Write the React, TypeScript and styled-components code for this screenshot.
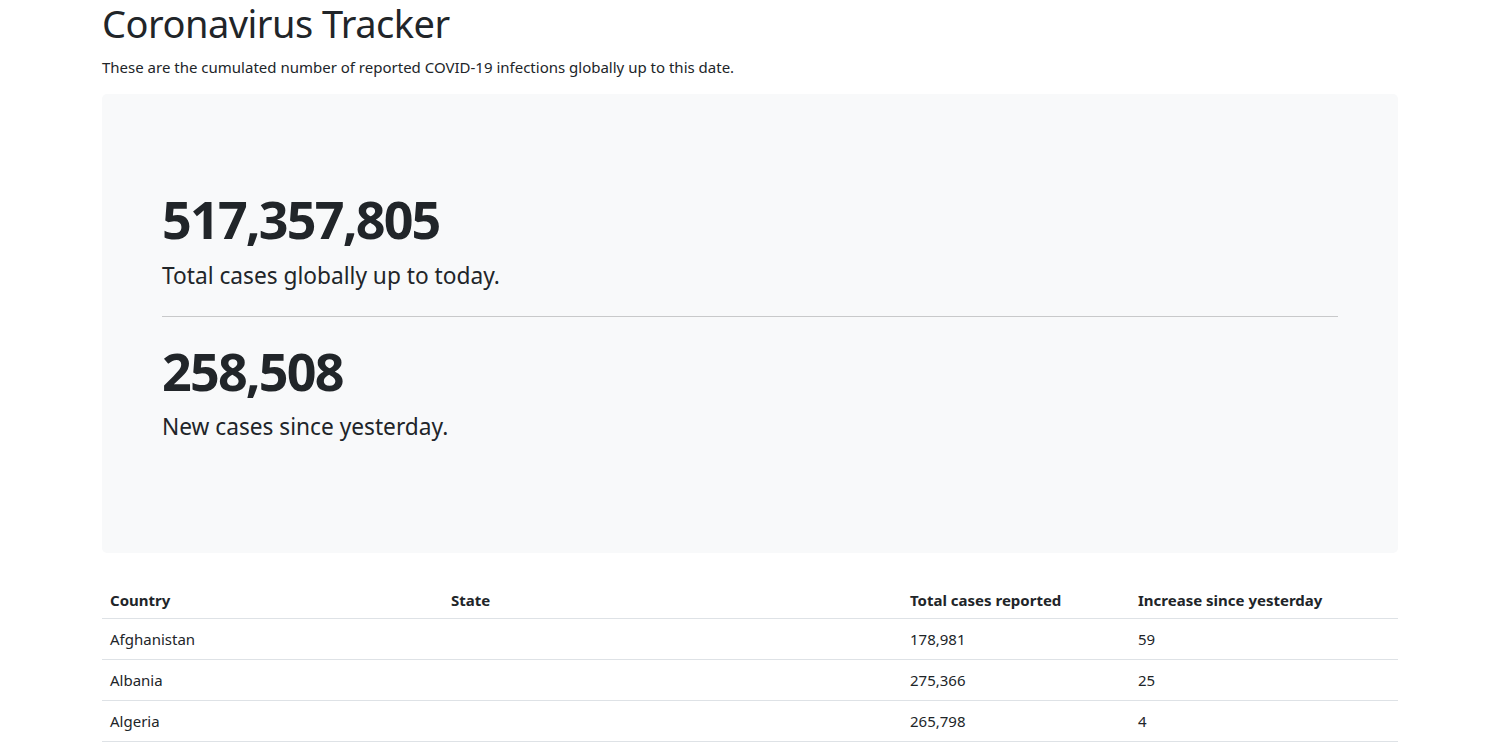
import React from "react";
import styled, { createGlobalStyle } from "styled-components";

const Global = createGlobalStyle`
  * { box-sizing: border-box; }
  body {
    margin: 0;
    font-family: "Noto Sans", "Open Sans", sans-serif;
    font-size: 16px;
    line-height: 1.5;
    color: #212529;
    background: #fff;
  }
`;

const Container = styled.div`
  width: 1296px;
  margin: 0 0 0 102px;
`;

const Title = styled.h1`
  margin: 0 0 8px;
  font-size: 38px;
  letter-spacing: -0.5px;
  font-weight: 400;
  line-height: 1.26;
`;

const Intro = styled.p`
  margin: 0 0 16px;
  font-size: 15px;
`;

const Jumbotron = styled.section`
  background: #f8f9fa;
  border-radius: 5px;
  padding: 94px 60px 109px;
  margin-bottom: 25px;
`;

const Stat = styled.div`
  display: flex;
  flex-direction: column;
`;

const BigNumber = styled.div`
  font-size: 52px;
  font-weight: 700;
  letter-spacing: -1.8px;
  line-height: 1.2;
`;

const Lead = styled.p`
  margin: 8px 0 0;
  font-size: 22.7px;
  font-weight: 400;
`;

const Divider = styled.hr`
  margin: 23px 0;
  border: 0;
  border-top: 1px solid #c8c9ca;
`;

const Table = styled.table`
  width: 100%;
  border-collapse: collapse;
  font-size: 15px;
  line-height: 24px;
`;

const Th = styled.th<{ $w: number }>`
  width: ${(p) => p.$w}px;
  text-align: left;
  font-weight: 700;
  padding: 10px 8px 6px;
  border-bottom: 1px solid #dee2e6;
`;

const Td = styled.td`
  padding: 8px;
  border-bottom: 1px solid #dee2e6;
`;

const rows = [
  ["Afghanistan", "", "178,981", "59"],
  ["Albania", "", "275,366", "25"],
  ["Algeria", "", "265,798", "4"],
];

export default function App() {
  return (
    <>
      <Global />
      <Container>
        <Title>Coronavirus Tracker</Title>
        <Intro>
          These are the cumulated number of reported COVID-19 infections globally up to this date.
        </Intro>
        <Jumbotron>
          <Stat>
            <BigNumber>517,357,805</BigNumber>
            <Lead>Total cases globally up to today.</Lead>
          </Stat>
          <Divider />
          <Stat>
            <BigNumber>258,508</BigNumber>
            <Lead>New cases since yesterday.</Lead>
          </Stat>
        </Jumbotron>
        <Table>
          <thead>
            <tr>
              <Th $w={341}>Country</Th>
              <Th $w={459}>State</Th>
              <Th $w={228}>Total cases reported</Th>
              <Th $w={268}>Increase since yesterday</Th>
            </tr>
          </thead>
          <tbody>
            {rows.map((r) => (
              <tr key={r[0]}>
                {r.map((c, i) => (
                  <Td key={i}>{c}</Td>
                ))}
              </tr>
            ))}
          </tbody>
        </Table>
      </Container>
    </>
  );
}
